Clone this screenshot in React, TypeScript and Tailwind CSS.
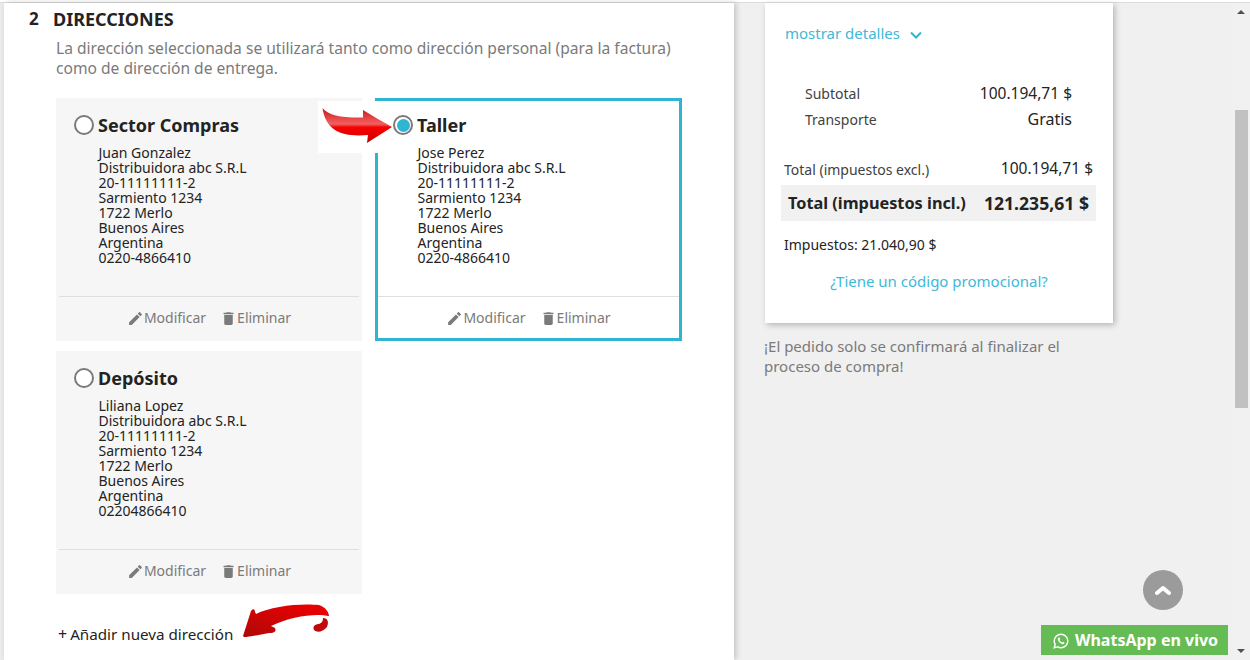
import { MdDelete, MdEdit } from 'react-icons/md';

type Address = {
  alias: string;
  name: string;
  phone: string;
  selected?: boolean;
};

const addresses: Address[] = [
  { alias: 'Sector Compras', name: 'Juan Gonzalez', phone: '0220-4866410' },
  { alias: 'Taller', name: 'Jose Perez', phone: '0220-4866410', selected: true },
  { alias: 'Depósito', name: 'Liliana Lopez', phone: '02204866410' },
];

const AddressCard = ({ address }: { address: Address }) => {
  const lines = [
    address.name,
    'Distribuidora abc S.R.L',
    '20-11111111-2',
    'Sarmiento 1234',
    '1722 Merlo',
    'Buenos Aires',
    'Argentina',
    address.phone,
  ];
  return (
    <div
      className={
        address.selected
          ? 'flex h-[243px] flex-col border-[3px] border-[#2fb5d2] bg-white'
          : 'flex h-[243px] flex-col border-[3px] border-[#f6f6f6] bg-[#f6f6f6]'
      }
    >
      <div className="flex h-[44px] items-center pt-[4px] pl-[15px]">
        <span className="flex h-[20px] w-[20px] items-center justify-center rounded-full border-2 border-[#7a7a7a] bg-white">
          {address.selected && <span className="h-[13px] w-[13px] rounded-full bg-[#2fb5d2]" />}
        </span>
        <span className="ml-[4px] text-[18px] leading-[24px] font-bold text-[#232323]">{address.alias}</span>
      </div>
      <div className="h-[151px] pl-[39.5px] text-[14px] leading-[15px] text-[#232323]">
        {lines.map((line) => (
          <div key={line}>{line}</div>
        ))}
      </div>
      <div className="flex flex-1 items-center justify-center gap-[14px] border-t border-[#dfdfdf] text-[14px] text-[#7a7a7a]">
        <span className="flex items-center">
          <MdEdit size={17} className="mt-[2px]" />
          <span>Modificar</span>
        </span>
        <span className="flex items-center">
          <MdDelete size={17} className="mt-[2px]" />
          <span>Eliminar</span>
        </span>
      </div>
    </div>
  );
};

const RightArrow = () => (
  <svg width="72" height="40" viewBox="0 0 72 40" className="absolute top-[105px] left-[321px]">
    <defs>
      <linearGradient id="arrowRed" x1="0" y1="0" x2="0" y2="1">
        <stop offset="0" stopColor="#c01818" />
        <stop offset="0.3" stopColor="#e84848" />
        <stop offset="0.46" stopColor="#f06060" />
        <stop offset="0.55" stopColor="#f80000" />
        <stop offset="0.8" stopColor="#e00000" />
        <stop offset="1" stopColor="#a80808" />
      </linearGradient>
    </defs>
    <path
      d="M1.5 3 C8 11 22 13 42 12.5 L42 5 C52 11 62 17 71 22 C63 27 54 33 46 38 L47 30 C22 32 5 27 1.5 3 Z"
      fill="url(#arrowRed)"
    />
  </svg>
);

const CurvedArrow = () => (
  <svg width="90" height="36" viewBox="0 0 90 36" className="absolute top-[603px] left-[241px]">
    <defs>
      <linearGradient id="curveRed" x1="0" y1="1" x2="1" y2="0">
        <stop offset="0" stopColor="#b00808" />
        <stop offset="1" stopColor="#f00000" />
      </linearGradient>
    </defs>
    <path
      d="M2 33 L10 8 C12 5 14 6 14 9 L15 11 C30 3 60 0 78 2 C85 4 88 10 88 13 C75 10 50 13 30 23 L34 25 C36 29 32 30 28 30 C18 32 8 34 3 34 Z"
      fill="url(#curveRed)"
    />
    <path d="M82 15 C87 15 88 19 86 24 C82 29 76 30 73 27 C71 23 75 21 78 21 C81 20 82 18 82 15 Z" fill="#c00a0a" />
  </svg>
);

const App = () => {
  return (
    <div className="relative h-[660px] w-[1250px] overflow-hidden bg-[#f0f0f0] font-['Noto_Sans','Open_Sans',sans-serif]">
      <div className="h-[3px] border-b border-[#dcdcdc] bg-white" />
      <div className="flex h-[657px]">
        <div className="w-[4px] bg-[#ececec]" />
        {/* left column */}
        <main className="w-[730px] bg-white pl-[25px] shadow-[2px_0_6px_rgba(0,0,0,0.2)]">
          <h1 className="flex h-[32px] items-center text-[18px] font-bold text-[#232323]">
            <span className="w-[24px] text-[17px]">2</span>
            <span>DIRECCIONES</span>
          </h1>
          <p className="mt-[3px] ml-[27px] w-[640px] text-[15.6px] leading-[20px] text-[#7a7a7a]">
            La dirección seleccionada se utilizará tanto como dirección personal (para la factura) como de dirección de entrega.
          </p>
          <div className="mt-[20px] ml-[27px] grid w-[626px] grid-cols-[306px_307px] gap-x-[13px] gap-y-[10px]">
            {addresses.map((a) => (
              <AddressCard key={a.alias} address={a} />
            ))}
          </div>
          <div className="mt-[30px] ml-[29px] flex items-center text-[15.2px] leading-[20px] text-[#232323]">
            <span className="mr-[3px] text-[16px]">+</span>
            <span>Añadir nueva dirección</span>
          </div>
        </main>
        {/* right column */}
        <aside className="w-[499px] pl-[31px]">
          <div className="h-[320px] w-[348px] bg-white shadow-[2px_2px_6px_rgba(0,0,0,0.25)]">
            <div className="flex h-[62px] items-center pb-[2px] pl-[20px] text-[15px] text-[#40b8d8]">
              mostrar detalles
              <svg width="12" height="8" viewBox="0 0 12 8" fill="none" className="mt-[3px] ml-[10px]">
                <path d="M1 1.5 L6 6.5 L11 1.5" stroke="#2fb5d2" strokeWidth="2" />
              </svg>
            </div>
            <div className="mt-[15px] pr-[41px] pl-[40px] text-[14px] text-[#414141]">
              <div className="flex h-[26px] items-center justify-between">
                <span>Subtotal</span>
                <span className="pt-[2px] text-[15.5px] text-[#232323]">100.194,71 $</span>
              </div>
              <div className="flex h-[26px] items-center justify-between">
                <span>Transporte</span>
                <span className="text-[16px] text-[#232323]">Gratis</span>
              </div>
            </div>
            <div className="mt-[24px] flex h-[26px] items-center justify-between pr-[20px] pl-[19px] text-[14px] text-[#414141]">
              <span>Total (impuestos excl.)</span>
              <span className="text-[15.5px] text-[#232323]">100.194,71 $</span>
            </div>
            <div className="mt-[3px] mr-[17px] ml-[16px] flex h-[36px] items-center justify-between bg-[#f1f1f1] pr-[7px] pl-[7px] font-bold text-[#232323]">
              <span className="text-[16.3px]">Total (impuestos incl.)</span>
              <span className="text-[17.6px]">121.235,61 $</span>
            </div>
            <div className="mt-[14px] pl-[19px] text-[14px] leading-[20px] text-[#232323]">Impuestos: 21.040,90 $</div>
            <div className="mt-[16px] text-center text-[15px] leading-[20px] text-[#40b8d8]">¿Tiene un código promocional?</div>
          </div>
          <p className="mt-[13px] -ml-[1px] w-[320px] text-[15px] leading-[20px] text-[#7a7a7a]">
            ¡El pedido solo se confirmará al finalizar el proceso de compra!
          </p>
        </aside>
        {/* scrollbar */}
        <div className="relative w-[17px] bg-[#f1f1f1]">
          <div className="absolute top-[107px] left-[2px] h-[298px] w-[13px] bg-[#c1c1c1]" />
          <div className="absolute top-[7px] left-[4px] h-0 w-0 border-x-[4px] border-b-[4px] border-x-transparent border-b-[#505050]" />
          <div className="absolute top-[646px] left-[4px] h-0 w-0 border-x-[4px] border-t-[4px] border-x-transparent border-t-[#505050]" />
        </div>
      </div>

      {/* white patch behind arrow, over the card */}
      <div className="absolute top-[101px] left-[318px] h-[52px] w-[44px] bg-white" />
      <div className="absolute top-[101px] left-[362px] h-[52px] w-[16px] bg-white" />
      <RightArrow />
      <CurvedArrow />

      <div className="absolute top-[570px] left-[1143px] flex h-[40px] w-[40px] items-center justify-center rounded-full bg-[#9b9b9b]">
        <svg width="16" height="10" viewBox="0 0 16 10" fill="none">
          <path d="M2 8 L8 3 L14 8" stroke="white" strokeWidth="4" strokeLinejoin="round" strokeLinecap="round" />
        </svg>
      </div>
      <div className="absolute top-[625px] left-[1041px] flex h-[30px] w-[187px] items-center bg-[#65bc54] pl-[12px] text-[16px] font-bold text-white">
        <svg width="16" height="16" viewBox="0 0 16 16" fill="none" className="mt-[1px] mr-[6px]">
          <path
            d="M1.2 14.8 L2.2 11.3 C1.5 10.2 1.2 9.1 1.2 8 C1.2 4.3 4.3 1.2 8 1.2 C11.7 1.2 14.8 4.3 14.8 8 C14.8 11.7 11.7 14.8 8 14.8 C6.8 14.8 5.7 14.5 4.7 13.9 Z"
            stroke="white"
            strokeWidth="1.4"
          />
          <path
            d="M5.6 4.6 C5 5 4.6 5.7 4.8 6.6 C5.2 8.6 7.4 10.9 9.5 11.2 C10.4 11.3 11.1 10.9 11.4 10.2 L11.4 9.5 L9.9 8.7 L9.1 9.5 C8.1 9.2 6.9 8 6.6 7 L7.3 6.2 L6.5 4.6 Z"
            fill="white"
          />
        </svg>
        WhatsApp en vivo
      </div>
    </div>
  );
};

export default App;
